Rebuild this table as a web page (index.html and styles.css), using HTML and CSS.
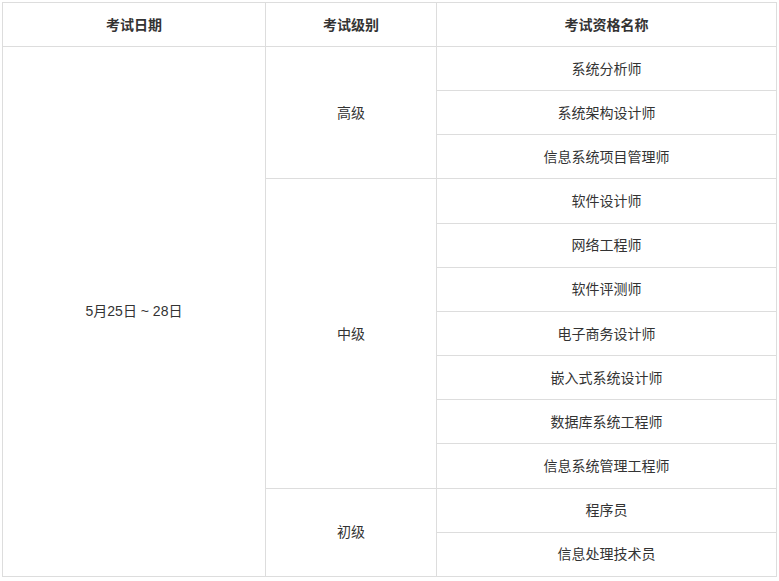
FILE: index.html
```html
<!DOCTYPE html>
<html lang="zh-CN">
<head>
<meta charset="utf-8">
<title>考试安排</title>
<link rel="stylesheet" href="styles.css">
</head>
<body>
<table class="exam-table">
  <colgroup>
    <col class="col-date">
    <col class="col-level">
    <col class="col-name">
  </colgroup>
  <thead>
    <tr class="head-row">
      <th>考试日期</th>
      <th>考试级别</th>
      <th>考试资格名称</th>
    </tr>
  </thead>
  <tbody>
    <tr><td rowspan="12">5月25日 ~ 28日</td><td rowspan="3">高级</td><td>系统分析师</td></tr>
    <tr><td>系统架构设计师</td></tr>
    <tr><td>信息系统项目管理师</td></tr>
    <tr><td rowspan="7">中级</td><td>软件设计师</td></tr>
    <tr><td>网络工程师</td></tr>
    <tr><td>软件评测师</td></tr>
    <tr><td>电子商务设计师</td></tr>
    <tr><td>嵌入式系统设计师</td></tr>
    <tr><td>数据库系统工程师</td></tr>
    <tr><td>信息系统管理工程师</td></tr>
    <tr><td rowspan="2">初级</td><td>程序员</td></tr>
    <tr><td>信息处理技术员</td></tr>
  </tbody>
</table>
</body>
</html>
```

FILE: styles.css
```css
html, body {
  background: #fff;
}
body {
  margin: 2px;
  font-family: "Liberation Sans", "Noto Sans CJK SC", sans-serif;
  font-size: 14px;
  color: #333;
}
.exam-table {
  width: 774px;
  border-collapse: collapse;
  table-layout: fixed;
}
.col-date { width: 263px; }
.col-level { width: 171px; }
.col-name { width: 340px; }
.exam-table th,
.exam-table td {
  border: 1px solid #ddd;
  text-align: center;
  vertical-align: middle;
  padding: 0 8px;
  line-height: 20px;
}
.exam-table th {
  font-weight: bold;
  color: #333;
}
.head-row {
  height: 44px;
}
.exam-table tbody tr {
  height: 44.17px;
}
```
